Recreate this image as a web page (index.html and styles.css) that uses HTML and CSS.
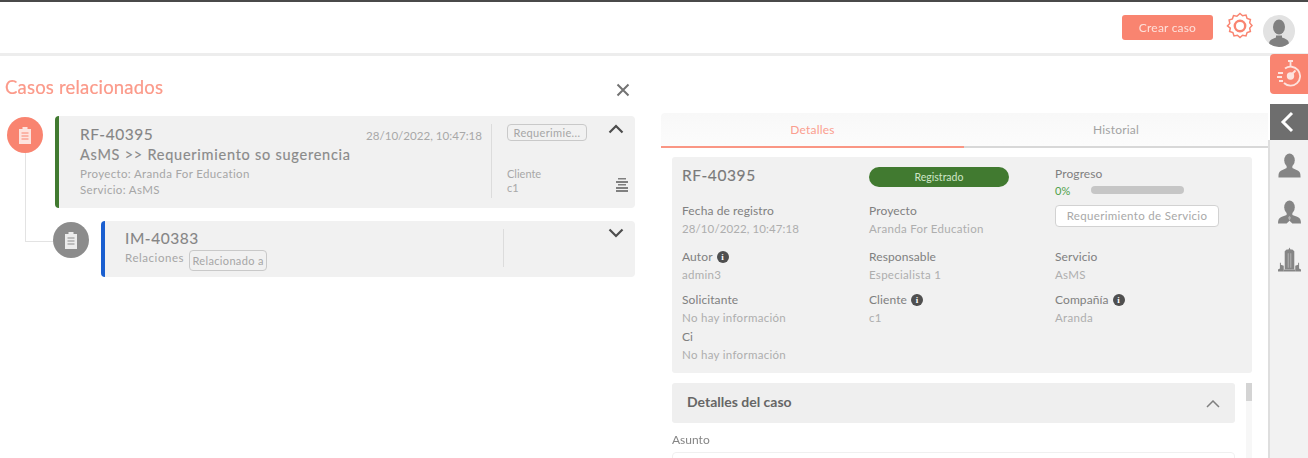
FILE: index.html
```html
<!DOCTYPE html>
<html lang="es">
<head>
<meta charset="utf-8">
<title>Casos relacionados</title>
<link rel="stylesheet" href="styles.css">
</head>
<body>
<div class="app">
  <header class="topbar">
    <button class="create">Crear caso</button>
    <svg class="gear" viewBox="0 0 28 28" fill="none" stroke="#f98470" stroke-width="1.5"><path d="M14 1.500l2.600 2.300 3.400-.7 1.100 3.300 3.300 1.100-.7 3.400 2.300 2.600-2.300 2.600.7 3.400-3.300 1.100-1.100 3.300-3.400-.7-2.600 2.300-2.600-2.300-3.400.7-1.100-3.300-3.300-1.100.7-3.400L1.500 14l2.300-2.600-.7-3.400 3.300-1.100L7.500 3.600l3.400.7z"/><circle cx="14" cy="14" r="5.200" stroke-width="2.400"/></svg>
    <div class="avatar">
      <svg viewBox="0 0 32 32" fill="#808080"><ellipse cx="16" cy="12" rx="6" ry="7.500"/><path d="M6 32v-3c0-4 3-5 7-6.500v-2h6v2c4 1.500 7 2.500 7 6.500v3z"/></svg>
    </div>
  </header>
  <div class="workspace">
    <section class="related">
      <div class="related-head">
        <h1>Casos relacionados</h1>
        <svg class="close" viewBox="0 0 14 14" stroke="#737373" stroke-width="2"><path d="M1.500 1.500l11 11M12.500 1.500l-11 11"/></svg>
      </div>
      <div class="tree">
        <span class="connector"></span>
        <div class="node">
          <div class="bullet bullet-on">
            <svg viewBox="0 0 12 17" fill="#fde3de"><path d="M3.500 0h5v2H12v15H0V2h3.500z"/><path d="M2.500 6h7M2.500 9h7M2.500 12h7" stroke="#f98470" stroke-width="1"/></svg>
          </div>
          <article class="case case-green">
            <div class="case-main">
              <div class="case-top"><span class="case-id">RF-40395</span><span class="case-date">28/10/2022, 10:47:18</span></div>
              <div class="case-title">AsMS &gt;&gt; Requerimiento so sugerencia</div>
              <div class="case-meta">Proyecto: Aranda For Education</div>
              <div class="case-meta">Servicio: AsMS</div>
            </div>
            <div class="case-side">
              <span class="tag tag-type">Requerimie...</span>
              <div class="side-label">Cliente</div>
              <div class="side-value">c1</div>
            </div>
            <div class="case-actions">
              <svg class="chev" viewBox="0 0 16 10" fill="none" stroke="#4d4d4d" stroke-width="2.200"><path d="M1.500 8.500L8 2l6.500 6.500"/></svg>
              <svg class="lines" viewBox="0 0 12 14" fill="#808080"><path d="M2 0h8v1.500H2zM0 3h12v2H0zM2 6h8v1.500H2zM0 9h12v2H0zM0 12h12v2H0z"/></svg>
            </div>
          </article>
        </div>
        <div class="node node-child">
          <div class="bullet bullet-off">
            <svg viewBox="0 0 12 17" fill="#ececec"><path d="M3.500 0h5v2H12v15H0V2h3.500z"/><path d="M2.500 6h7M2.500 9h7M2.500 12h7" stroke="#8c8c8c" stroke-width="1"/></svg>
          </div>
          <article class="case case-blue">
            <div class="case-main">
              <div class="case-id">IM-40383</div>
              <div class="case-rel"><span>Relaciones</span><span class="tag">Relacionado a</span></div>
            </div>
            <div class="case-side"></div>
            <div class="case-actions">
              <svg class="chev" viewBox="0 0 16 10" fill="none" stroke="#4d4d4d" stroke-width="2.200"><path d="M1.500 1.500L8 8l6.500-6.500"/></svg>
            </div>
          </article>
        </div>
      </div>
    </section>

    <section class="detail">
      <nav class="tabs">
        <div class="tab tab-active">Detalles</div>
        <div class="tab">Historial</div>
      </nav>
      <div class="summary">
        <div class="field summary-id">RF-40395</div>
        <div class="field"><span class="status">Registrado</span></div>
        <div class="field field-progress">
          <div class="label">Progreso</div>
          <div class="progress"><span class="pct">0%</span><span class="bar"></span></div>
          <div class="type-box">Requerimiento de Servicio</div>
        </div>
        <div class="field"><div class="label">Fecha de registro</div><div class="value value-date">28/10/2022, 10:47:18</div></div>
        <div class="field"><div class="label">Proyecto</div><div class="value">Aranda For Education</div></div>
        <div class="field"><div class="label">Autor <i class="info">i</i></div><div class="value">admin3</div></div>
        <div class="field"><div class="label">Responsable</div><div class="value">Especialista 1</div></div>
        <div class="field"><div class="label">Servicio</div><div class="value">AsMS</div></div>
        <div class="field"><div class="label">Solicitante</div><div class="value">No hay información</div></div>
        <div class="field"><div class="label">Cliente <i class="info">i</i></div><div class="value">c1</div></div>
        <div class="field"><div class="label">Compañía <i class="info">i</i></div><div class="value">Aranda</div></div>
        <div class="field"><div class="label">Ci</div><div class="value">No hay información</div></div>
      </div>
      <div class="scroll-area">
        <div class="scroll-content">
          <div class="accordion">
            <span>Detalles del caso</span>
            <svg viewBox="0 0 14 8" fill="none" stroke="#808080" stroke-width="1.500"><path d="M1 7l6-6 6 6"/></svg>
          </div>
          <div class="subject-label">Asunto</div>
          <div class="subject-input"></div>
        </div>
        <div class="scrollbar"><span></span></div>
      </div>
    </section>

    <aside class="rail">
      <div class="rail-tab rail-timer">
        <svg viewBox="0 0 24 28" fill="none" stroke="#fde3de" stroke-width="1.800"><path d="M11 1h5M13.500 1v5"/><path d="M8 8.500a9.500 9.500 0 1 1-1 14.500"/><path d="M1 13h5M0 17h5M2 21h4"/><circle cx="13.500" cy="16" r="2.800" fill="#fde3de"/><path d="M14 15l4.500-4.500"/></svg>
      </div>
      <div class="rail-tab rail-back">
        <svg viewBox="0 0 14 22" fill="none" stroke="#fff" stroke-width="3"><path d="M12 2L3 11l9 9"/></svg>
      </div>
      <div class="rail-icons">
        <svg viewBox="0 0 24 25" fill="#858585"><ellipse cx="12" cy="7" rx="5.500" ry="7"/><path d="M9 12h6v3l6 3c2 1 2.500 3 2.500 6v1H.5v-1c0-3 .5-5 2.500-6l6-3z"/></svg>
        <svg viewBox="0 0 24 25" fill="#858585"><ellipse cx="12" cy="7" rx="5.500" ry="7"/><path d="M9 12h6v3l5 2c3 1 4 3 4 7H15l-3-3-3 3H0c0-4 1-6 4-7l5-2z"/><path d="M12 16l-1.500 2 1.500 3 1.500-3z" fill="#b5b5b5"/></svg>
        <svg viewBox="0 0 24 25" fill="#858585"><path d="M12 0l1 2h2l2 2v19H7V4l2-2h2z"/><path d="M0 25v-2l2-1v-6h1v2l3 1v6zM24 25v-2l-2-1v-6h-1v2l-3 1v6z"/><path d="M6 23h12v2H6z"/><path d="M10 6h1.500v15H10zM12.500 6H14v15h-1.500z" fill="#a6a6a6"/></svg>
      </div>
    </aside>
  </div>
</div>
</body>
</html>
```
FILE: styles.css
```css
* { box-sizing: border-box; }
html, body { margin: 0; height: 100%; overflow: hidden; background: #fff; }
body { font-family: Lato, "Noto Sans", sans-serif; color: #7a7a7a; }
.app { height: 458px; display: flex; flex-direction: column; filter: blur(0.5px); }

.topbar { height: 56px; flex: none; display: flex; align-items: flex-start; justify-content: flex-end; border-top: 2px solid #4a4a4a; border-bottom: 3px solid #ededed; padding: 13px 13px 0 0; }
.create { width: 91px; height: 25px; margin-right: 13px; border: 0; border-radius: 3px; background: #f98470; color: #fde0da; font: 12px Lato, sans-serif; letter-spacing: .2px; padding: 0; }
.gear { width: 28px; height: 28px; margin-top: -3px; margin-right: 9px; }
.avatar { width: 32px; height: 32px; border-radius: 50%; overflow: hidden; background: #e2e2e2; }
.avatar svg { display: block; width: 32px; height: 32px; }

.workspace { flex: 1; display: flex; min-height: 0; }

.related { width: 661px; flex: none; padding: 0 26px 0 5px; }
.related-head { height: 60px; display: flex; align-items: flex-start; justify-content: space-between; padding-top: 20px; }
.related-head h1 { margin: 0; font-size: 18.500px; line-height: 22px; font-weight: 400; color: #fb9a8a; letter-spacing: .2px; -webkit-text-stroke: .2px #fb9a8a; }
.close { width: 14px; height: 14px; margin-top: 7px; margin-right: 5px; }

.tree { position: relative; margin-left: 2px; display: flex; flex-direction: column; gap: 13px; }
.connector { position: absolute; left: 18px; top: 30px; width: 30px; height: 96px; border-left: 1px solid #e3e3e3; border-bottom: 1px solid #e3e3e3; }
.node { position: relative; display: flex; gap: 12px; align-items: flex-start; }
.node-child { margin-left: 46px; }
.bullet { width: 36px; height: 36px; flex: none; border-radius: 50%; display: flex; align-items: center; justify-content: center; margin-top: 1px; }
.bullet svg { width: 12px; height: 17px; }
.bullet-on { background: #f98470; }
.bullet-off { background: #8c8c8c; }

.case { flex: 1; display: flex; background: #f1f1f1; border-left: 4px solid; border-radius: 4px; }
.case-green { border-color: #417a30; height: 92px; }
.case-blue { border-color: #1a5fd0; height: 56px; }
.case-main { flex: 1; padding: 8px 9px 0 21px; min-width: 0; }
.case-blue .case-main { padding-left: 20px; padding-top: 7px; }
.case-top { display: flex; justify-content: space-between; align-items: baseline; }
.case-id { font-size: 15.500px; line-height: 20px; letter-spacing: .55px; color: #858585; -webkit-text-stroke: .1px #858585; }
.case-date { font-size: 11.600px; color: #a8a8a8; }
.case-title { margin: 1px 0 1px; font-size: 14.500px; line-height: 20px; letter-spacing: .75px; color: #8a8a8a; -webkit-text-stroke: .15px #8a8a8a; }
.case-meta { font-size: 11.500px; line-height: 16px; color: #a6a6a6; letter-spacing: .35px; }
.case-rel { display: flex; gap: 5px; align-items: flex-start; font-size: 11.500px; line-height: 18px; color: #a6a6a6; margin-top: 1px; letter-spacing: .55px; }

.tag { display: inline-block; border: 1px solid #c9c9c9; border-radius: 4px; font-size: 11px; line-height: 19px; height: 21px; width: 78px; text-align: center; color: #a6a6a6; margin-top: 1px; white-space: nowrap; letter-spacing: .35px; }
.tag-type { display: block; width: 80px; height: 17px; line-height: 15px; margin: 0; }

.case-side { flex: none; position: relative; margin: 8px 0 10px; border-left: 1px solid #dcdcdc; padding: 0 0 0 15px; }
.side-label { margin-top: 26px; font-size: 11px; line-height: 14px; color: #a8a8a8; }
.side-value { font-size: 11px; line-height: 13px; color: #a8a8a8; }
.case-actions { width: 28px; flex: none; position: relative; display: flex; flex-direction: column; align-items: flex-end; padding: 8px 11px 0 0; }
.case-blue .case-actions { padding-top: 7px; }
.chev { width: 16px; height: 10px; }
.lines { width: 12px; height: 14px; position: absolute; right: 7px; bottom: 16px; }
.case-blue .case-side { width: 104px; }
.case-green .case-side { width: 116px; }

.detail { flex: 1; min-width: 0; padding-top: 57px; display: flex; flex-direction: column; }
.tabs { display: flex; height: 35px; flex: none; background: linear-gradient(#f8f8f8, #fcfcfc); border-radius: 4px 0 0 0; }
.tab { flex: 1; text-align: center; font-size: 12px; line-height: 34px; color: #a3a3a3; border-bottom: 2px solid #d8d8d8; letter-spacing: .2px; }
.tab-active { color: #fa9e8f; border-bottom-color: #fa9684; flex: none; width: 303px; }

.summary { margin: 9px 16px 0 11px; height: 216px; flex: none; background: #f1f1f1; border-radius: 3px; padding: 8px 10px 0; display: grid; grid-template-columns: 187px 186px 1fr; grid-template-rows: 37px 46px 43px 37px 37px; }
.field-progress { grid-row: span 2; }
.summary-id { font-size: 15.500px; line-height: 20px; letter-spacing: .6px; color: #7a7a7a; -webkit-text-stroke: .15px #7a7a7a; }
.status { display: block; width: 140px; height: 20px; margin-top: 2px; border-radius: 10px; background: #417a30; color: #cfe6c7; font-size: 10.500px; line-height: 20px; text-align: center; }
.label { font-size: 12px; line-height: 18px; color: #808080; display: flex; align-items: center; gap: 4px; letter-spacing: .1px; }
.value { font-size: 11.500px; line-height: 18px; color: #aeaeae; letter-spacing: .3px; }
.value-date { letter-spacing: .1px; }
.info { width: 12px; height: 12px; border-radius: 50%; background: #4f4f4f; color: #fff; font: 700 9px/12px "Liberation Serif", serif; text-align: center; display: inline-block; }
.progress { display: flex; align-items: center; gap: 20px; height: 16px; margin-top: -1px; }
.pct { font-size: 11px; color: #4ea04a; width: 16px; }
.bar { width: 93px; height: 8px; border-radius: 4px; background: #c6c6c6; }
.type-box { width: 164px; height: 22px; margin-top: 7px; background: #fff; border: 1px solid #d2d2d2; border-radius: 4px; font-size: 11.500px; line-height: 20px; text-align: center; color: #a8a8a8; letter-spacing: .33px; }

.scroll-area { flex: 1; min-height: 0; margin: 10px 16px 0 11px; display: flex; gap: 11px; overflow: hidden; }
.scroll-content { flex: 1; min-width: 0; }
.accordion { height: 40px; background: #efefef; border-radius: 3px; display: flex; align-items: center; justify-content: space-between; padding: 0 15px; font-size: 14px; font-weight: 700; color: #666; }
.accordion span { margin-bottom: 4px; }
.accordion svg { width: 14px; height: 8px; margin-top: 2px; }
.subject-label { margin-top: 9px; font-size: 12px; line-height: 16px; color: #858585; }
.subject-input { height: 30px; margin-top: 4px; border: 1px solid #f0f0f0; border-radius: 4px; }
.scrollbar { width: 6px; flex: none; background: #f7f7f7; }
.scrollbar span { display: block; height: 18px; background: #d4d4d4; }

.rail { width: 40px; flex: none; display: flex; flex-direction: column; align-items: flex-end; }
.rail-tab { width: 38px; flex: none; display: flex; align-items: center; justify-content: center; }
.rail-timer { height: 40px; margin-top: -2px; background: #f98470; border-radius: 4px 0 0 4px; }
.rail-timer svg { width: 24px; height: 28px; }
.rail-back { height: 36px; margin-top: 10px; background: #6e6e6e; }
.rail-back svg { width: 14px; height: 22px; margin-right: 4px; }
.rail-icons { flex: 1; width: 40px; background: #f2f2f2; border-left: 2px solid #dedede; display: flex; flex-direction: column; align-items: center; gap: 22px; padding-top: 13px; }
.rail-icons svg { width: 23px; height: 25px; flex: none; }
```
